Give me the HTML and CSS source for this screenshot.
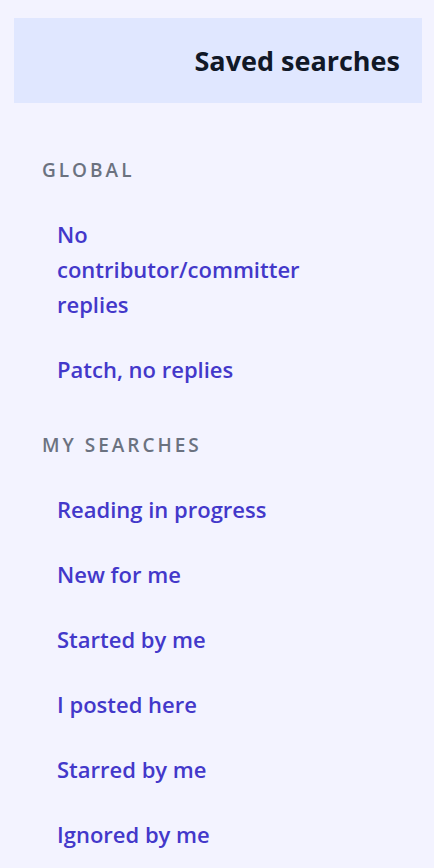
FILE: index.html
```html
<!DOCTYPE html>
<html lang="en">
<head>
  <meta charset="UTF-8" />
  <meta name="viewport" content="width=device-width, initial-scale=1.0"/>
  <title>Saved searches</title>
  <link rel="stylesheet" href="styles.css">
</head>
<body>
  <div class="sidebar">
    <div class="title">Saved searches</div>

    <div class="group">
      <div class="group-label">Global</div>
      <ul class="links">
        <li><a href="#">No contributor/committer replies</a></li>
        <li><a href="#">Patch, no replies</a></li>
      </ul>
    </div>

    <div class="group">
      <div class="group-label">My searches</div>
      <ul class="links">
        <li><a href="#">Reading in progress</a></li>
        <li><a href="#">New for me</a></li>
        <li><a href="#">Started by me</a></li>
        <li><a href="#">I posted here</a></li>
        <li><a href="#">Starred by me</a></li>
        <li><a href="#">Ignored by me</a></li>
      </ul>
    </div>
  </div>
</body>
</html>
```

FILE: styles.css
```css
* {
  box-sizing: border-box;
  font-family: "Open Sans", "Noto Sans", sans-serif;
}

body {
  margin: 0;
  background: #f3f3ff;
}

.sidebar {
  padding: 18px 12px 0 14px;
}

.title {
  background: #e0e7ff;
  height: 85px;
  display: flex;
  align-items: center;
  justify-content: flex-end;
  padding-right: 22px;
  font-size: 27px;
  font-weight: bold;
  color: #111827;
}

.group {
  padding-left: 28px;
}

.group-label {
  margin-top: 55px;
  font-size: 19px;
  line-height: 24px;
  font-weight: 600;
  text-transform: uppercase;
  letter-spacing: 3px;
  color: #6b7280;
}

.links {
  list-style: none;
  margin: 20px 0 0;
  padding: 0;
  width: 290px;
}

.links li {
  padding: 15px;
}

.links a {
  display: block;
  font-size: 22px;
  line-height: 35px;
  font-weight: 600;
  color: #4338ca;
  text-decoration: none;
}

.group + .group .group-label {
  margin-top: 31px;
}
```
